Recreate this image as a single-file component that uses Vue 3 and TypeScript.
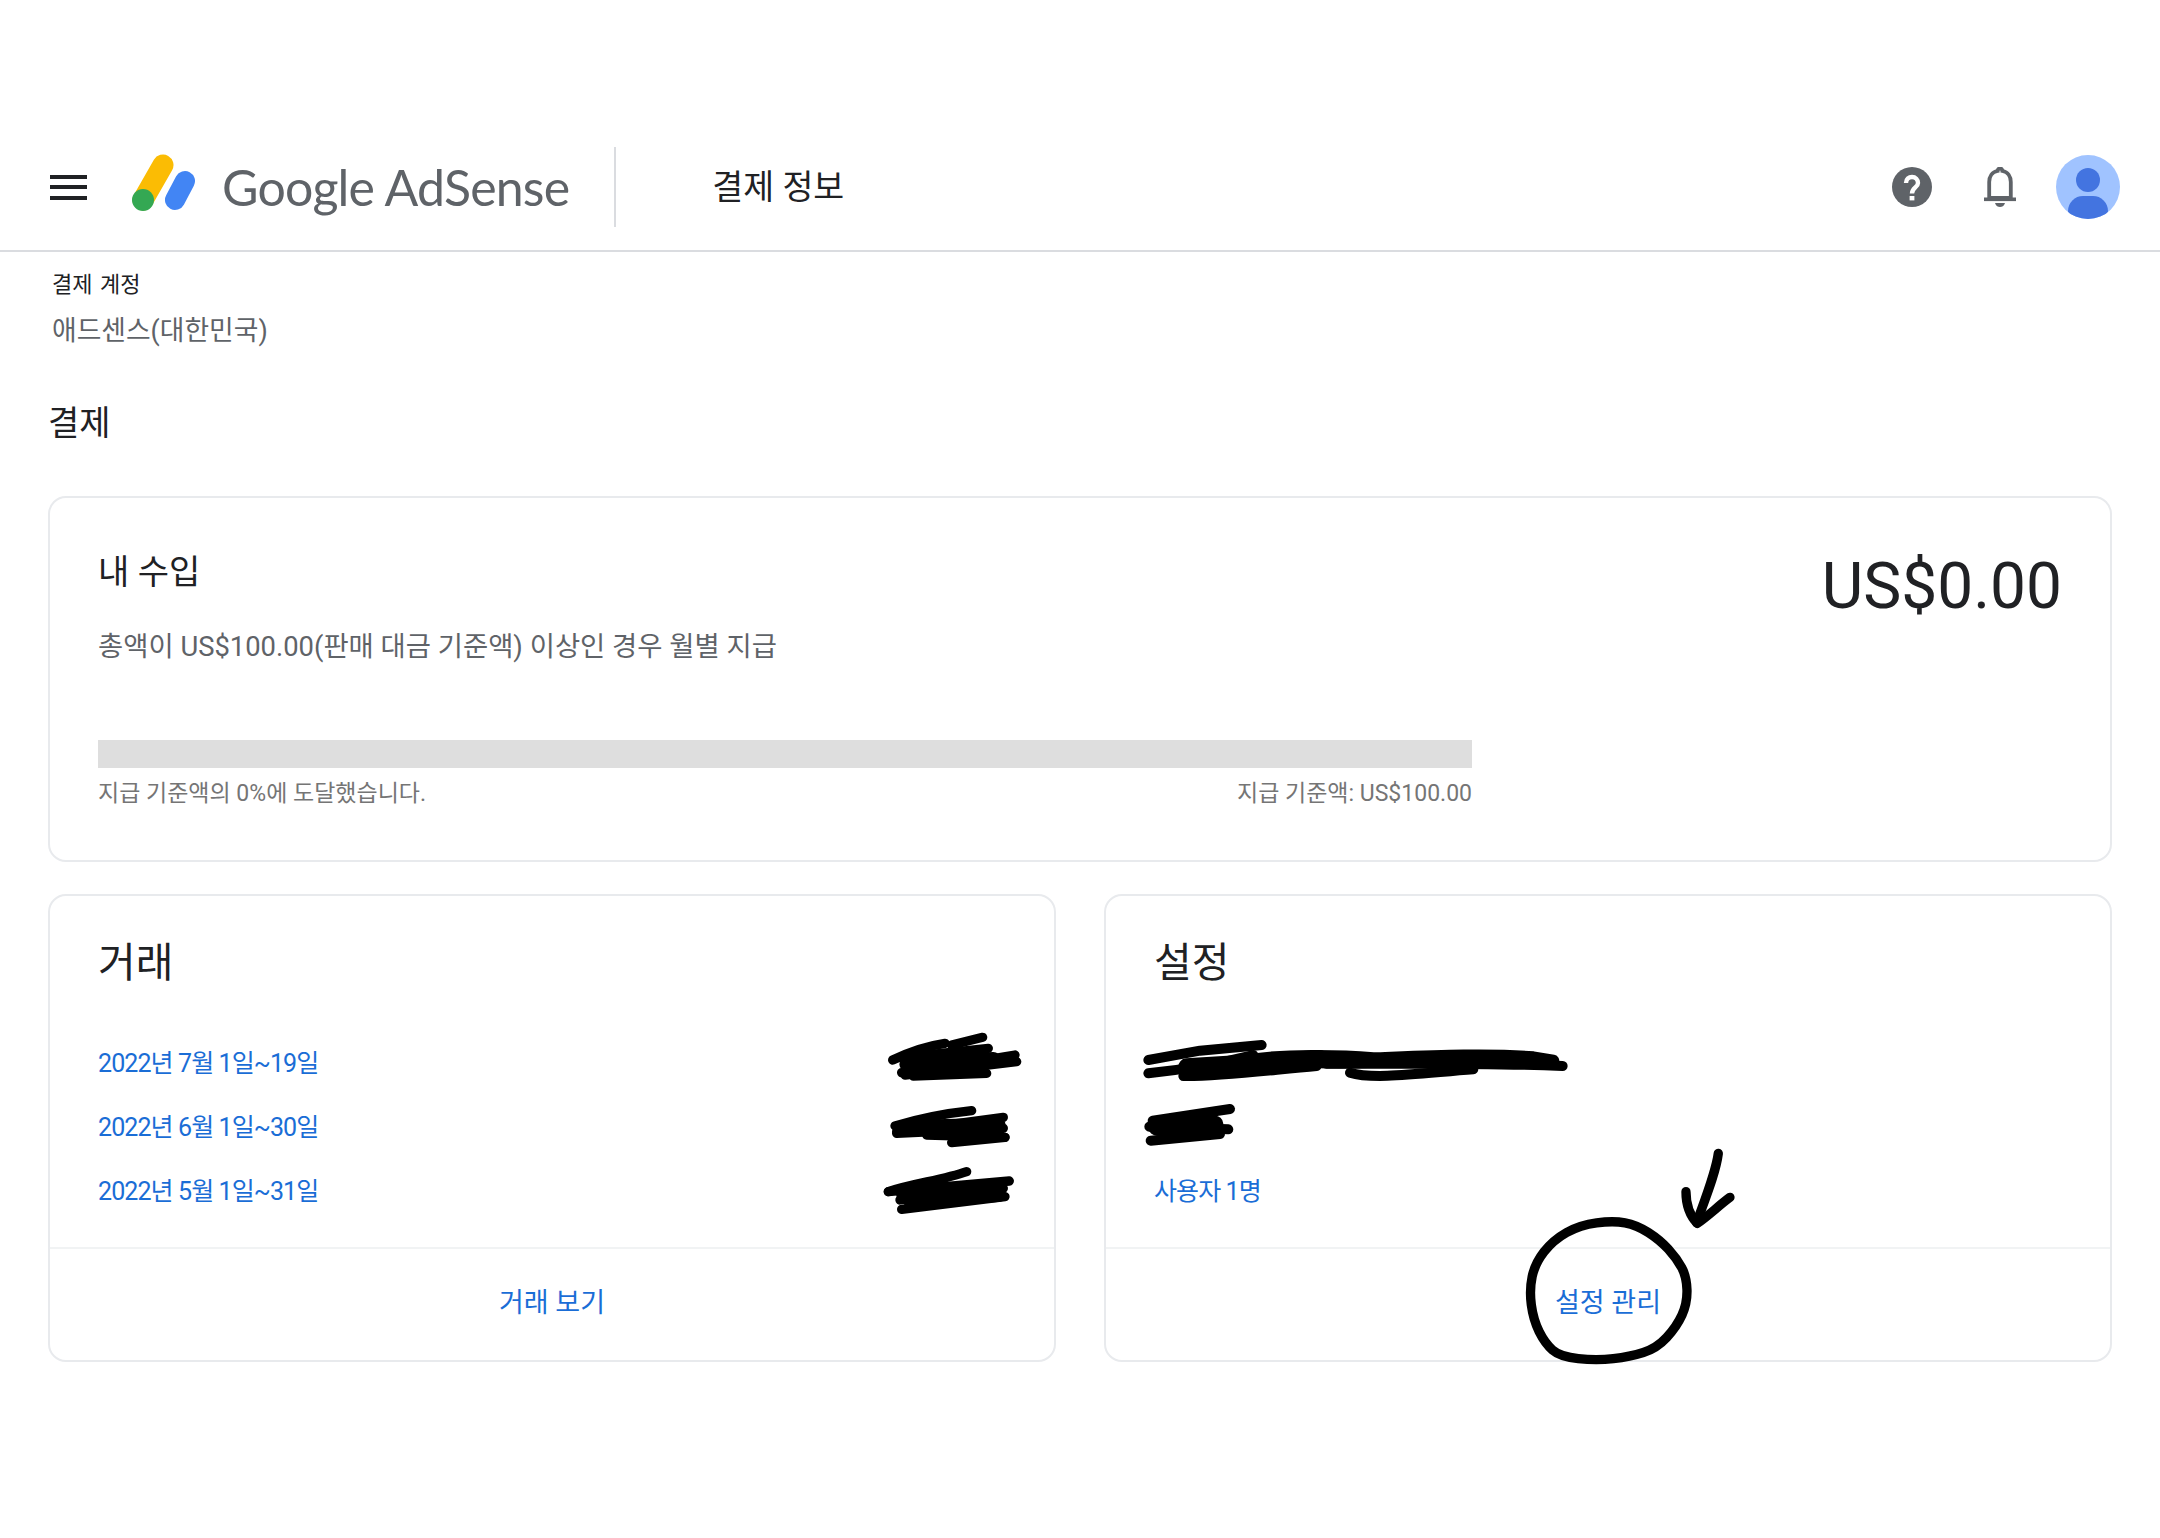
<template>
  <div class="page">
    <header class="topbar">
      <button class="menu-btn" aria-label="메뉴">
        <span></span><span></span><span></span>
      </button>
      <svg class="logo-mark" width="66" height="60" viewBox="0 0 66 60">
        <path d="M12 47 L32 12" stroke="#fbbc04" stroke-width="21" stroke-linecap="round" fill="none" />
        <circle cx="12" cy="47" r="11" fill="#34a853" />
        <path d="M54 28 L44 47" stroke="#4285f4" stroke-width="20" stroke-linecap="round" fill="none" />
      </svg>
      <div class="logo-text">Google AdSense</div>
      <div class="topbar-divider"></div>
      <div class="page-title">결제 정보</div>
      <div class="topbar-actions">
        <svg class="help" width="40" height="40" viewBox="0 0 40 40">
          <circle cx="20" cy="20" r="20" fill="#5f6368" />
          <path d="M14 16 C14 12 17 10 20 10 C23.5 10 26 12.5 26 16 C26 20.5 20 20.5 20 26.5" stroke="#fff" stroke-width="4.4" fill="none" />
          <rect x="17.6" y="29" width="4.8" height="4.4" fill="#fff" />
        </svg>
        <svg class="bell" width="32" height="40" viewBox="0 0 32 40">
          <path d="M16 1.5 a2.4 2.4 0 0 1 2.4 2.4 C24 5 26.8 9.5 26.8 15 V31 H5.2 V15 C5.2 9.5 8 5 13.6 3.9 A2.4 2.4 0 0 1 16 1.5 Z" fill="none" stroke="#5f6368" stroke-width="3.8" />
          <rect x="0" y="30.5" width="32" height="3.6" fill="#5f6368" />
          <path d="M11 36 H21 C20 39 18 40 16 40 C14 40 12 39 11 36 Z" fill="#5f6368" />
        </svg>
        <svg class="avatar" width="64" height="64" viewBox="0 0 64 64">
          <defs>
            <clipPath id="avatar-clip"><circle cx="32" cy="32" r="32" /></clipPath>
          </defs>
          <circle cx="32" cy="32" r="32" fill="#a0c3ff" />
          <g clip-path="url(#avatar-clip)">
            <circle cx="32" cy="25" r="12" fill="#4374e0" />
            <rect x="12" y="41" width="40" height="30" rx="15" fill="#4374e0" />
          </g>
        </svg>
      </div>
    </header>

    <main class="content">
      <div class="account">
        <div class="account-label">결제 계정</div>
        <div class="account-name">애드센스(대한민국)</div>
      </div>

      <h2 class="section-title">결제</h2>

      <section class="card earnings">
        <div class="earnings-main">
          <div class="earnings-title">내 수입</div>
          <div class="earnings-desc">총액이 US$100.00(판매 대금 기준액) 이상인 경우 월별 지급</div>
          <div class="progress">
            <div class="progress-fill" :style="{ width: progress + '%' }"></div>
          </div>
          <div class="progress-labels">
            <span>지급 기준액의 {{ progress }}%에 도달했습니다.</span>
            <span>지급 기준액: US$100.00</span>
          </div>
        </div>
        <div class="amount">US$0.00</div>
      </section>

      <div class="card-grid">
        <section class="card panel">
          <div class="panel-body">
            <h3 class="panel-title">거래</h3>
            <div v-for="item in transactions" :key="item" class="row"><a class="link row-link">{{ item }}</a></div>
          </div>
          <div class="panel-footer"><a class="link">거래 보기</a></div>
        </section>

        <section class="card panel">
          <div class="panel-body">
            <h3 class="panel-title">설정</h3>
            <div class="row"></div>
            <div class="row"></div>
            <div class="row"><a class="link row-link">사용자 1명</a></div>
          </div>
          <div class="panel-footer"><a class="link">설정 관리</a></div>
        </section>
      </div>
    </main>

    <!-- hand-drawn marks that sit on top of the page -->
    <svg class="marks" width="2160" height="1538" viewBox="0 0 2160 1538">
      <g fill="none" stroke="#000" stroke-linecap="round" stroke-linejoin="round">
        <g transform="translate(860 1020) scale(0.3333)" stroke-width="28">
          <path d="M98 120 C150 95 200 78 255 70" />
          <path d="M275 75 L368 52" />
          <path d="M150 110 L385 85" />
          <path d="M125 158 C250 140 380 120 465 105" />
          <path d="M135 165 L470 125" />
          <path d="M160 168 L380 160" />
          <path stroke-width="44" d="M140 132 L400 118" />
          <path d="M105 318 C180 295 260 280 335 272" />
          <path d="M110 335 L430 292" />
          <path d="M110 340 L430 325" />
          <path d="M200 345 L435 352" />
          <path d="M275 368 L435 352" />
          <path stroke-width="44" d="M130 322 L415 315" />
          <path d="M85 515 C160 490 250 480 320 455" />
          <path d="M85 515 L448 483" />
          <path d="M120 540 L430 505" />
          <path d="M125 568 L435 530" />
          <path stroke-width="44" d="M130 522 L410 508" />
          <path stroke-width="36" d="M150 550 L420 527" />
        </g>
        <g transform="translate(1120 1020) scale(0.3333)" stroke-width="30">
          <path d="M85 120 L240 92 L425 75" />
          <path d="M85 160 C180 150 300 130 400 105" />
          <path d="M190 168 C300 170 450 150 590 138" />
          <path stroke-width="50" d="M200 140 L600 115" />
          <path stroke-width="36" d="M400 118 C500 105 650 105 760 115 C900 110 1100 100 1240 112 L1300 122" />
          <path d="M600 130 C700 135 1000 125 1328 138" />
          <path d="M690 158 C760 180 900 160 1060 148" />
          <path stroke-width="36" d="M620 128 L1200 118" />
          <path d="M98 302 L330 267" />
          <path d="M88 320 L325 328" />
          <path d="M92 362 L300 342" />
          <path stroke-width="50" d="M110 322 L285 312" />
        </g>
        <g transform="translate(1480 1130) scale(0.3333)" stroke-width="28">
          <path :d="circlePath" />
          <path d="M715 70 C708 125 680 195 650 278" />
          <path d="M618 185 C618 220 628 255 652 280 C680 262 715 228 750 202" />
        </g>
      </g>
    </svg>
  </div>
</template>

<script setup lang="ts">
const progress: number = 0;

const transactions: string[] = [
  '2022년 7월 1일~19일',
  '2022년 6월 1일~30일',
  '2022년 5월 1일~31일',
];

// rough outline of the hand-drawn circle, smoothed through the midpoints
const circlePoints: [number, number][] = [
  [240, 680], [195, 640], [160, 570], [148, 480], [165, 400], [220, 330], [300, 285],
  [400, 272], [470, 285], [540, 330], [590, 385], [620, 440], [622, 520], [590, 590],
  [530, 655], [450, 680], [350, 692],
];

const smooth = (points: [number, number][]): string => {
  const mid = (a: [number, number], b: [number, number]) => `${(a[0] + b[0]) / 2} ${(a[1] + b[1]) / 2}`;
  let d = `M${mid(points[points.length - 1], points[0])}`;
  points.forEach((p, i) => {
    d += ` Q${p[0]} ${p[1]} ${mid(p, points[(i + 1) % points.length])}`;
  });
  return d + ' Z';
};

const circlePath = smooth(circlePoints);
</script>

<style>
html,
body {
  margin: 0;
  background: #fff;
}
</style>

<style scoped>
.page {
  position: relative;
  width: 2160px;
  height: 1538px;
  overflow: hidden;
  background: #fff;
  color: #202124;
  font-family: Roboto, "Noto Sans CJK KR", sans-serif;
}

.topbar {
  display: flex;
  align-items: center;
  height: 126px;
  padding-top: 124px;
  border-bottom: 2px solid #dadce0;
}

.menu-btn {
  display: flex;
  flex-direction: column;
  justify-content: space-between;
  width: 37px;
  height: 25px;
  margin-left: 50px;
  padding: 0;
  border: 0;
  background: none;
}

.menu-btn span {
  height: 4px;
  background: #202124;
}

.logo-mark {
  margin-left: 44px;
  margin-top: -8px;
}

.logo-text {
  margin-left: 25px;
  color: #5f6368;
  font-family: Lato, sans-serif;
  font-size: 50px;
  line-height: 60px;
  letter-spacing: -0.8px;
  white-space: nowrap;
}

.topbar-divider {
  width: 2px;
  height: 80px;
  margin-left: 45px;
  background: #dadce0;
}

.page-title {
  margin-left: 96px;
  margin-top: -6px;
  font-size: 33.6px;
}

.topbar-actions {
  display: flex;
  align-items: center;
  margin-left: auto;
  margin-right: 40px;
}

.help {
  margin-right: 52px;
}

.bell {
  margin-right: 40px;
}

.content {
  padding: 0 48px;
}

.account {
  padding: 17px 0 0 4px;
}

.account-label {
  font-size: 22px;
  line-height: 32px;
  word-spacing: 2px;
}

.account-name {
  margin-top: 10px;
  color: #5f6368;
  font-size: 26.8px;
  line-height: 40px;
}

.section-title {
  margin: 50px 0 51px;
  font-size: 34px;
  font-weight: 400;
  line-height: 44px;
}

.card {
  box-sizing: border-box;
  border: 2px solid #e8eaed;
  border-radius: 18px;
  background: #fff;
}

.earnings {
  display: flex;
  justify-content: space-between;
  height: 366px;
  padding: 52px 48px 0 48px;
}

.earnings-main {
  width: 1374px;
}

.earnings-title {
  font-size: 34px;
  line-height: 44px;
}

.earnings-desc {
  margin-top: 33px;
  color: #5f6368;
  font-size: 27.4px;
  line-height: 40px;
}

.progress {
  height: 28px;
  margin-top: 73px;
  background: #dedede;
}

.progress-fill {
  height: 100%;
  background: #1a73e8;
}

.progress-labels {
  display: flex;
  justify-content: space-between;
  margin-top: 9px;
  color: #757575;
  font-size: 23px;
  line-height: 34px;
}

.amount {
  margin-top: -1px;
  font-size: 64px;
  line-height: 76px;
}

.card-grid {
  display: grid;
  grid-template-columns: 1fr 1fr;
  gap: 48px;
  margin-top: 32px;
}

.panel {
  display: flex;
  flex-direction: column;
  height: 468px;
}

.panel-body {
  flex: 1;
  padding: 39px 48px 0;
}

.panel-title {
  margin: 0 0 41px;
  font-size: 41px;
  font-weight: 400;
  line-height: 56px;
}

.row {
  display: flex;
  align-items: center;
  height: 64px;
}

.panel-footer {
  display: flex;
  align-items: center;
  justify-content: center;
  height: 113px;
  padding-bottom: 3px;
  box-sizing: border-box;
  border-top: 2px solid #f1f3f4;
}

.link {
  color: #1a6dd6;
  font-size: 27px;
  line-height: 36px;
  white-space: nowrap;
}

.row-link {
  font-size: 25px;
  letter-spacing: -0.9px;
}

.marks {
  position: absolute;
  top: 0;
  left: 0;
  pointer-events: none;
}
</style>
